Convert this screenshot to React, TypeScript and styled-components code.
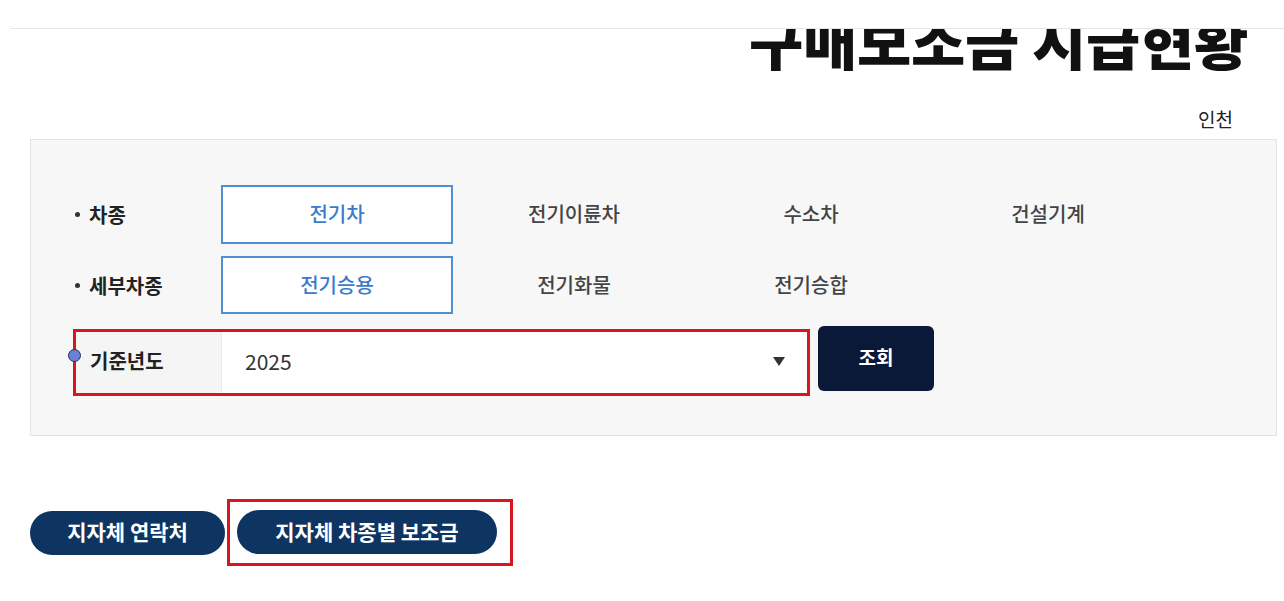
import React, { useState } from "react";
import styled, { createGlobalStyle } from "styled-components";

const GlobalStyle = createGlobalStyle`
  html, body {
    margin: 0;
    padding: 0;
    background: #ffffff;
    font-family: "Noto Sans CJK KR", "Noto Sans", sans-serif;
    color: #222;
  }
  * { box-sizing: border-box; }
`;

const Page = styled.div`
  width: 1284px;
  height: 601px;
  overflow: hidden;
`;

const TopBar = styled.div`
  height: 29px;
  margin-left: 10px;
  border-bottom: 1px solid #e6e6e6;
`;

// title is scrolled up under the top bar, so only its lower part shows
const TitleClip = styled.div`
  height: 52px;
  overflow: hidden;
  display: flex;
  justify-content: flex-end;
  padding-right: 36px;
`;

const Title = styled.h1`
  margin: -19px 0 0;
  font-size: 59px;
  line-height: 1;
  font-weight: 900;
  color: #111;
  letter-spacing: -0.3px;
`;

const Region = styled.div`
  display: flex;
  justify-content: flex-end;
  padding-right: 51px;
  margin-top: 27px;
  height: 31px;
  font-size: 19px;
  line-height: 22px;
  color: #222;
`;

const SearchPanel = styled.div`
  margin-left: 30px;
  width: 1247px;
  background: #f7f7f7;
  border: 1px solid #e3e3e3;
  padding: 45px 0 39px 42px;
  display: flex;
  flex-direction: column;
`;

const OptionRow = styled.div<{ $gap: number }>`
  display: grid;
  grid-template-columns: 143px repeat(4, 232px);
  column-gap: 5px;
  margin-bottom: ${(p) => p.$gap}px;
  & > * { min-width: 0; }
`;

const RowLabel = styled.div`
  display: flex;
  align-items: center;
  padding-left: 2px;
  font-size: 20px;
  font-weight: 700;
  color: #222;
  white-space: nowrap;

  &::before {
    content: "";
    width: 5px;
    height: 5px;
    border-radius: 50%;
    background: #333;
    margin-right: 9px;
  }
`;

const Option = styled.button<{ $active?: boolean; $h: number }>`
  height: ${(p) => p.$h}px;
  border: 2px solid ${(p) => (p.$active ? "#4f8fd3" : "transparent")};
  background: ${(p) => (p.$active ? "#ffffff" : "transparent")};
  color: ${(p) => (p.$active ? "#3a7ccb" : "#444")};
  font-family: inherit;
  font-size: 20px;
  font-weight: 500;
  padding: 0 0 2px;
  cursor: pointer;
`;

const YearLine = styled.div`
  display: flex;
  align-items: flex-start;
  gap: 8px;
`;

const Marked = styled.div<{ $w: number }>`
  position: relative;
  width: ${(p) => p.$w}px;
  border: 3px solid #d8161d;
`;

const Handle = styled.span`
  position: absolute;
  left: -8px;
  top: 17px;
  width: 13px;
  height: 13px;
  border-radius: 50%;
  background: #6a80d6;
  border: 1.5px solid #26305a;
`;

const Field = styled.div`
  display: flex;
  height: 61px;
`;

const FieldLabel = styled.div`
  width: 146px;
  display: flex;
  align-items: center;
  padding: 0 0 5px 14px;
  background: #f5f5f5;
  border-right: 1px solid #e8e8e8;
  font-size: 20px;
  font-weight: 700;
  color: #222;
`;

const Select = styled.div`
  flex: 1;
  display: flex;
  align-items: center;
  justify-content: space-between;
  background: #fff;
  padding: 0 22px 3px 23px;
  font-size: 21px;
  color: #333;
`;

const Arrow = styled.span`
  width: 0;
  height: 0;
  border-left: 6px solid transparent;
  border-right: 6px solid transparent;
  border-top: 9px solid #333;
`;

const SearchButton = styled.button`
  margin-top: -3px;
  width: 116px;
  height: 65px;
  border: none;
  border-radius: 6px;
  background: #0b1939;
  color: #fff;
  font-family: inherit;
  font-size: 19px;
  font-weight: 700;
  padding-bottom: 6px;
`;

const LinkBar = styled.div`
  display: flex;
  align-items: center;
  margin-top: 63px;
  padding-left: 30px;
`;

const LinkMark = styled.div`
  margin-left: 2px;
  padding: 8px 13px 9px 7px;
  border: 3px solid #d8161d;
`;

const Pill = styled.button<{ $w: number }>`
  width: ${(p) => p.$w}px;
  height: 44px;
  border: none;
  border-radius: 22px;
  background: #0e3461;
  color: #fff;
  font-family: inherit;
  font-size: 21px;
  font-weight: 700;
  padding: 0 0 3px;
  display: block;
  white-space: nowrap;
`;

const KINDS = ["전기차", "전기이륜차", "수소차", "건설기계"];
const SUBKINDS = ["전기승용", "전기화물", "전기승합"];

export default function App() {
  const [kind, setKind] = useState("전기차");
  const [sub, setSub] = useState("전기승용");

  return (
    <Page>
      <GlobalStyle />
      <TopBar />
      <TitleClip>
        <Title>구매보조금 지급현황</Title>
      </TitleClip>
      <Region>인천</Region>

      <SearchPanel>
        <OptionRow $gap={12}>
          <RowLabel>차종</RowLabel>
          {KINDS.map((k) => (
            <Option key={k} $h={59} $active={kind === k} onClick={() => setKind(k)}>
              {k}
            </Option>
          ))}
        </OptionRow>
        <OptionRow $gap={15}>
          <RowLabel>세부차종</RowLabel>
          {SUBKINDS.map((k) => (
            <Option key={k} $h={58} $active={sub === k} onClick={() => setSub(k)}>
              {k}
            </Option>
          ))}
        </OptionRow>
        <YearLine>
          <Marked $w={737}>
            <Handle />
            <Field>
              <FieldLabel>기준년도</FieldLabel>
              <Select>
                <span>2025</span>
                <Arrow />
              </Select>
            </Field>
          </Marked>
          <SearchButton>조회</SearchButton>
        </YearLine>
      </SearchPanel>

      <LinkBar>
        <Pill $w={195}>지자체 연락처</Pill>
        <LinkMark>
          <Pill $w={260}>지자체 차종별 보조금</Pill>
        </LinkMark>
      </LinkBar>
    </Page>
  );
}
